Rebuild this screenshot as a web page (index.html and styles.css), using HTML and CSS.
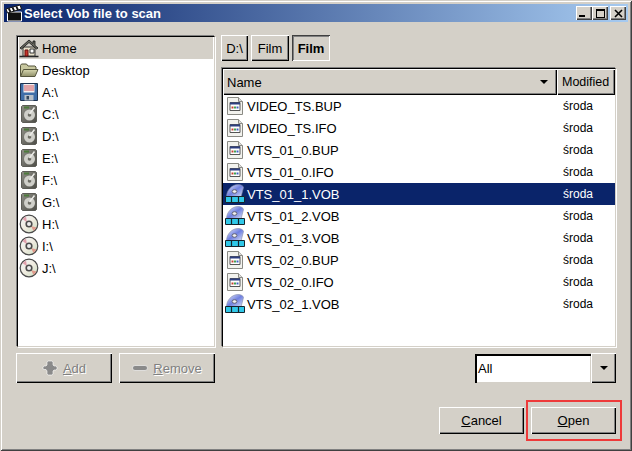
FILE: index.html
```html
<!DOCTYPE html>
<html lang="pl">
<head>
<meta charset="utf-8">
<title>Select Vob file to scan</title>
<link rel="stylesheet" href="styles.css">
</head>
<body>
<svg class="defs" width="0" height="0" aria-hidden="true">
  <defs>
    <linearGradient id="fld" x1="0" y1="0" x2="0" y2="1"><stop offset="0" stop-color="#d8d8b0"/><stop offset="1" stop-color="#8f8f68"/></linearGradient>
    <linearGradient id="cd" x1="0" y1="0" x2="1" y2="1"><stop offset="0" stop-color="#f0f4f8"/><stop offset=".5" stop-color="#f0ece0"/><stop offset="1" stop-color="#c8dcc0"/></linearGradient>
    <linearGradient id="dvd" x1="0" y1="0" x2="1" y2="1"><stop offset="0" stop-color="#eef0fa"/><stop offset=".5" stop-color="#6f80e0"/><stop offset="1" stop-color="#dfe4f6"/></linearGradient>
    <linearGradient id="hdd" x1="0" y1="0" x2="1" y2="1"><stop offset="0" stop-color="#8e8e86"/><stop offset="1" stop-color="#4e4e48"/></linearGradient>
    <symbol id="i-home" viewBox="0 0 20 20">
      <path d="M.5 18.500h19" stroke="#222" stroke-width="1.500"/>
      <path d="M4 9h12v9H4z" fill="#e8e0c8" stroke="#333"/>
      <path d="M1 10 10 2l4 3.500V3h2v4.500l3 2.500-1.500 1L10 4.500 2.500 11z" fill="#6a6a60" stroke="#111" stroke-width=".8"/>
      <path d="M6 12h3v6H6z" fill="#c8352a" stroke="#611"/>
      <path d="M11 11h4v4h-4z" fill="#fff" stroke="#333"/>
    </symbol>
    <symbol id="i-folder" viewBox="0 0 20 20">
      <path d="M1.500 16V5.500l1-1.500h5l1.500 2h7l1 1v2.500" fill="#c8c8a0" stroke="#55553c"/>
      <path d="M1.500 16.500 4.500 9.500h14.500l-3 7z" fill="url(#fld)" stroke="#55553c"/>
    </symbol>
    <symbol id="i-floppy" viewBox="0 0 20 20">
      <path d="M1.500 1.500h17v17h-17z" fill="#3f6ea8" stroke="#1e3350"/>
      <path d="M4.500 2h11v8.500h-11z" fill="#f4f0f0"/>
      <path d="M5 4h10M5 6h10M5 8h10" stroke="#d05860"/>
      <path d="M5.500 13h9v5.500h-9z" fill="#b8c0c8"/>
      <path d="M7.500 14h2.500v3.500H7.500z" fill="#33475c"/>
    </symbol>
    <symbol id="i-hdd" viewBox="0 0 20 20">
      <path d="M3.500 1.500h13l1 1v15l-1 1h-13l-1-1v-15z" fill="url(#hdd)" stroke="#5c5c56"/>
      <circle cx="10.500" cy="11" r="5.500" fill="#cfcfc9"/>
      <circle cx="10.500" cy="11" r="1.800" fill="#6c6c64"/>
      <path d="M15.500 3.500 10.500 10" stroke="#ecece8" stroke-width="1.500"/>
      <path d="M5 3.500h5" stroke="#4d7a3c" stroke-width="2"/>
    </symbol>
    <symbol id="i-cd" viewBox="0 0 20 20">
      <circle cx="10" cy="10" r="8.800" fill="url(#cd)" stroke="#4a4a4a" stroke-width="1.200"/>
      <path d="M3.500 5 8 8.500 7 2.500z" fill="#e0a0ac"/>
      <path d="M12 12 14.500 17 17.500 13.500z" fill="#e09a8c"/>
      <circle cx="10" cy="10" r="2.800" fill="#eee" stroke="#4c4c4c" stroke-width="1.600"/>
    </symbol>
    <symbol id="i-doc" viewBox="0 0 20 20">
      <path d="M2.500 1.500h11l4 4v13h-15z" fill="#f2f2ee" stroke="#8a8a84"/>
      <path d="M13.500 1.500v4h4" fill="#ddd" stroke="#8a8a84"/>
      <path d="M5 6.500h10v8H5z" fill="#fff" stroke="#555"/>
      <path d="M5 6.500h10v2H5z" fill="#2d3f80"/>
      <path d="M6.500 10.500h2v2h-2z" fill="#c84030"/>
      <path d="M9 10.500h2v2H9z" fill="#40a050"/>
      <path d="M11.500 10.500h2v2h-2z" fill="#4060c0"/>
    </symbol>
    <symbol id="i-vob" viewBox="0 0 20 20">
      <path d="M1.500 13C1.500 6 7 .5 13 .5c3 0 5.500 1.500 5.500 3L16 13z" fill="url(#dvd)" stroke="#8088a8" stroke-width=".6"/>
      <ellipse cx="9.500" cy="7.500" rx="2.400" ry="1.800" fill="#f0f0f0" stroke="#667"/>
      <path d="M.5 12.500h19v6H.5z" fill="#30c8e8" stroke="#16242c"/>
      <path d="M6.500 12.500v6M13.500 12.500v6" stroke="#16242c" stroke-width="1.200"/>
    </symbol>
    <symbol id="i-plus" viewBox="0 0 16 16">
      <path d="M6 1h4l1 1v3l1 1h2l1 1v2l-1 1h-2l-1 1v3l-1 1H6l-1-1v-3L4 9.500H2L1 9V7l1-1h2l1-1V2z" fill="#8a8a8a" stroke="#fff" stroke-width=".6"/>
    </symbol>
    <symbol id="i-minus" viewBox="0 0 16 8">
      <rect x=".5" y="1.500" width="15" height="5" rx="2.500" fill="#8a8a8a" stroke="#fff" stroke-width=".6"/>
    </symbol>
    <symbol id="i-clap" viewBox="0 0 18 18">
      <path d="M2.500 8h14v9h-14z" fill="#111" stroke="#fff"/>
      <path d="M1 5 15 1l1.500 4L2.500 9z" fill="#fff" stroke="#111"/>
      <path d="M3.800 4.500 5.500 8M7.500 3.400 9.200 7M11.300 2.400 13 6" stroke="#111" stroke-width="1.800"/>
    </symbol>
  </defs>
</svg>
<div class="window">
  <header class="titlebar">
    <svg class="title-icon"><use href="#i-clap"/></svg>
    <span class="title-text">Select Vob file to scan</span>
    <div class="caption-btns">
      <span class="cap"><i class="g-min"></i></span>
      <span class="cap"><i class="g-max"></i></span>
      <span class="cap cap-close"><svg width="9" height="9" viewBox="0 0 9 9"><path d="M1 1l7 7M8 1 1 8" stroke="#000" stroke-width="1.600"/></svg></span>
    </div>
  </header>
  <main class="content">
    <div class="panes">
      <nav class="sidebar sunken">
        <div class="side-row active"><svg class="ico"><use href="#i-home"/></svg>Home</div>
        <div class="side-row"><svg class="ico"><use href="#i-folder"/></svg>Desktop</div>
        <div class="side-row"><svg class="ico"><use href="#i-floppy"/></svg>A:\</div>
        <div class="side-row"><svg class="ico"><use href="#i-hdd"/></svg>C:\</div>
        <div class="side-row"><svg class="ico"><use href="#i-hdd"/></svg>D:\</div>
        <div class="side-row"><svg class="ico"><use href="#i-hdd"/></svg>E:\</div>
        <div class="side-row"><svg class="ico"><use href="#i-hdd"/></svg>F:\</div>
        <div class="side-row"><svg class="ico"><use href="#i-hdd"/></svg>G:\</div>
        <div class="side-row"><svg class="ico"><use href="#i-cd"/></svg>H:\</div>
        <div class="side-row"><svg class="ico"><use href="#i-cd"/></svg>I:\</div>
        <div class="side-row"><svg class="ico"><use href="#i-cd"/></svg>J:\</div>
      </nav>
      <section class="browser">
        <div class="crumbs">
          <span class="btn crumb c-drive">D:\</span>
          <span class="btn crumb c-film">Film</span>
          <span class="btn crumb c-film pressed">Film</span>
        </div>
        <div class="list sunken">
          <div class="list-head">
            <span class="head head-name">Name<i class="arrow"></i></span>
            <span class="head head-mod">Modified</span>
          </div>
          <div class="file"><span class="fname"><svg class="ico"><use href="#i-doc"/></svg>VIDEO_TS.BUP</span><span class="fdate">środa</span></div>
          <div class="file"><span class="fname"><svg class="ico"><use href="#i-doc"/></svg>VIDEO_TS.IFO</span><span class="fdate">środa</span></div>
          <div class="file"><span class="fname"><svg class="ico"><use href="#i-doc"/></svg>VTS_01_0.BUP</span><span class="fdate">środa</span></div>
          <div class="file"><span class="fname"><svg class="ico"><use href="#i-doc"/></svg>VTS_01_0.IFO</span><span class="fdate">środa</span></div>
          <div class="file selected"><span class="fname"><svg class="ico"><use href="#i-vob"/></svg>VTS_01_1.VOB</span><span class="fdate">środa</span></div>
          <div class="file"><span class="fname"><svg class="ico"><use href="#i-vob"/></svg>VTS_01_2.VOB</span><span class="fdate">środa</span></div>
          <div class="file"><span class="fname"><svg class="ico"><use href="#i-vob"/></svg>VTS_01_3.VOB</span><span class="fdate">środa</span></div>
          <div class="file"><span class="fname"><svg class="ico"><use href="#i-doc"/></svg>VTS_02_0.BUP</span><span class="fdate">środa</span></div>
          <div class="file"><span class="fname"><svg class="ico"><use href="#i-doc"/></svg>VTS_02_0.IFO</span><span class="fdate">środa</span></div>
          <div class="file"><span class="fname"><svg class="ico"><use href="#i-vob"/></svg>VTS_02_1.VOB</span><span class="fdate">środa</span></div>
        </div>
      </section>
    </div>
    <div class="tools">
      <div class="tool-btns">
        <span class="btn disabled tool"><svg class="tool-ico" width="16" height="16"><use href="#i-plus"/></svg><span><u>A</u>dd</span></span>
        <span class="btn disabled tool"><svg class="tool-ico" width="16" height="8"><use href="#i-minus"/></svg><span><u>R</u>emove</span></span>
      </div>
      <div class="combo">
        <span class="combo-field">All</span>
        <span class="btn combo-arrow"><i class="arrow"></i></span>
      </div>
    </div>
    <div class="actions">
      <span class="btn action"><span><u>C</u>ancel</span></span>
      <span class="btn action highlighted"><span><u>O</u>pen</span></span>
    </div>
  </main>
</div>
</body>
</html>
```
FILE: styles.css
```css
* { box-sizing: border-box; }
html, body { margin: 0; padding: 0; }
body {
  width: 632px;
  height: 451px;
  overflow: hidden;
  background: #d4d0c8;
  font-family: "Liberation Sans", Arial, sans-serif;
  font-size: 13px;
  color: #000;
}
.defs { position: absolute; }
.window {
  width: 632px;
  height: 451px;
  display: flex;
  flex-direction: column;
  padding: 4px;
  background: #d4d0c8;
  box-shadow: inset 1px 1px 0 #d4d0c8, inset -1px -1px 0 #404040, inset 2px 2px 0 #fff, inset -2px -2px 0 #808080;
}
.titlebar {
  height: 18px;
  flex: none;
  display: flex;
  align-items: center;
  padding: 0 2px 0 1px;
  background: linear-gradient(90deg, #0a246a, #a6caf0);
  color: #fff;
}
.title-icon { width: 18px; height: 18px; flex: none; margin-right: 1px; }
.title-text {
  font-weight: bold;
  font-size: 13px;
  flex: 1;
}
.caption-btns { display: flex; }
.cap {
  width: 16px;
  height: 14px;
  display: flex;
  align-items: center;
  justify-content: center;
  background: #d4d0c8;
  box-shadow: inset 1px 1px 0 #fff, inset -1px -1px 0 #404040, inset -2px -2px 0 #808080;
}
.cap-close { margin-left: 2px; }
.g-min { width: 6px; height: 2px; background: #000; align-self: flex-end; margin: 0 4px 3px 0; }
.g-max { width: 9px; height: 9px; border: 1px solid #000; border-top-width: 2px; }
.content {
  flex: 1;
  display: flex;
  flex-direction: column;
  padding: 13px 12px 0;
  min-height: 0;
}
.panes { display: flex; gap: 5px; height: 312px; flex: none; }
.sunken {
  background: #fff;
  border-style: solid;
  border-width: 1px;
  border-color: #000 #d4d0c8 #d4d0c8 #000;
  box-shadow: 1px 1px 0 #fff, -1px -1px 0 #808080;
}
.sidebar {
  width: 198px;
  margin: 1px 1px 0 1px;
  flex: none;
  padding: 0 1px;
}
.side-row {
  height: 22px;
  display: flex;
  align-items: center;
  white-space: nowrap;
}
.side-row.active { background: #d4d0c8; }
.side-row .ico { margin-right: 3px; }
.ico { width: 20px; height: 20px; flex: none; margin-right: 2px; }
.browser { flex: 1; display: flex; flex-direction: column; min-width: 0; }
.crumbs { display: flex; gap: 3px; height: 26px; flex: none; }
.btn {
  display: flex;
  align-items: center;
  justify-content: center;
  background: #d4d0c8;
  box-shadow: inset 1px 1px 0 #fff, inset -1px -1px 0 #000, inset -2px -2px 0 #808080;
}
.c-drive { width: 27px; }
.c-film { width: 38px; }
.crumb.pressed {
  font-weight: bold;
  box-shadow: inset 1px 1px 0 #404040, inset -1px -1px 0 #fff, inset 2px 2px 0 #808080;
}
.list {
  flex: 1;
  margin: 7px 0 0 1px;
  min-height: 0;
}
.list-head { display: flex; height: 26px; background: #d4d0c8; }
.head {
  display: flex;
  align-items: center;
  box-shadow: inset 1px 1px 0 #fff, inset -1px -1px 0 #000, inset -2px -2px 0 #808080;
}
.head-name { flex: 1; padding: 0 9px 0 4px; justify-content: space-between; }
.head-mod { width: 58px; padding-left: 5px; white-space: nowrap; font-size: 12.500px; }
.arrow {
  width: 0;
  height: 0;
  border-left: 4px solid transparent;
  border-right: 4px solid transparent;
  border-top: 4px solid #000;
}
.file {
  height: 22px;
  display: flex;
  align-items: center;
}
.fname { flex: 1; display: flex; align-items: center; padding-left: 2px; }
.fdate { width: 58px; padding-left: 6px; font-size: 12px; }
.file.selected { background: #0a246a; color: #fff; }
.tools { display: flex; justify-content: space-between; height: 30px; margin-top: 6px; flex: none; }
.tool-btns { display: flex; gap: 7px; }
.tool { width: 96px; height: 30px; gap: 5px; }
.tool-ico { flex: none; }
.disabled { color: #808080; text-shadow: 1px 1px 0 #fff; }
.combo { display: flex; height: 30px; }
.combo-field {
  width: 116px;
  margin-top: 1px;
  background: #fff;
  display: flex;
  align-items: center;
  padding-left: 3px;
  box-shadow: inset 2px 2px 0 #000, inset -1px -1px 0 #d4d0c8;
}
.combo-arrow { width: 25px; }
.actions { display: flex; justify-content: flex-end; gap: 7px; margin-top: 24px; }
.action { width: 85px; height: 27px; position: relative; }
.highlighted::after {
  content: "";
  position: absolute;
  inset: -7px -6px -7px -5px;
  border: 2px solid #ee3a3a;
}
```
